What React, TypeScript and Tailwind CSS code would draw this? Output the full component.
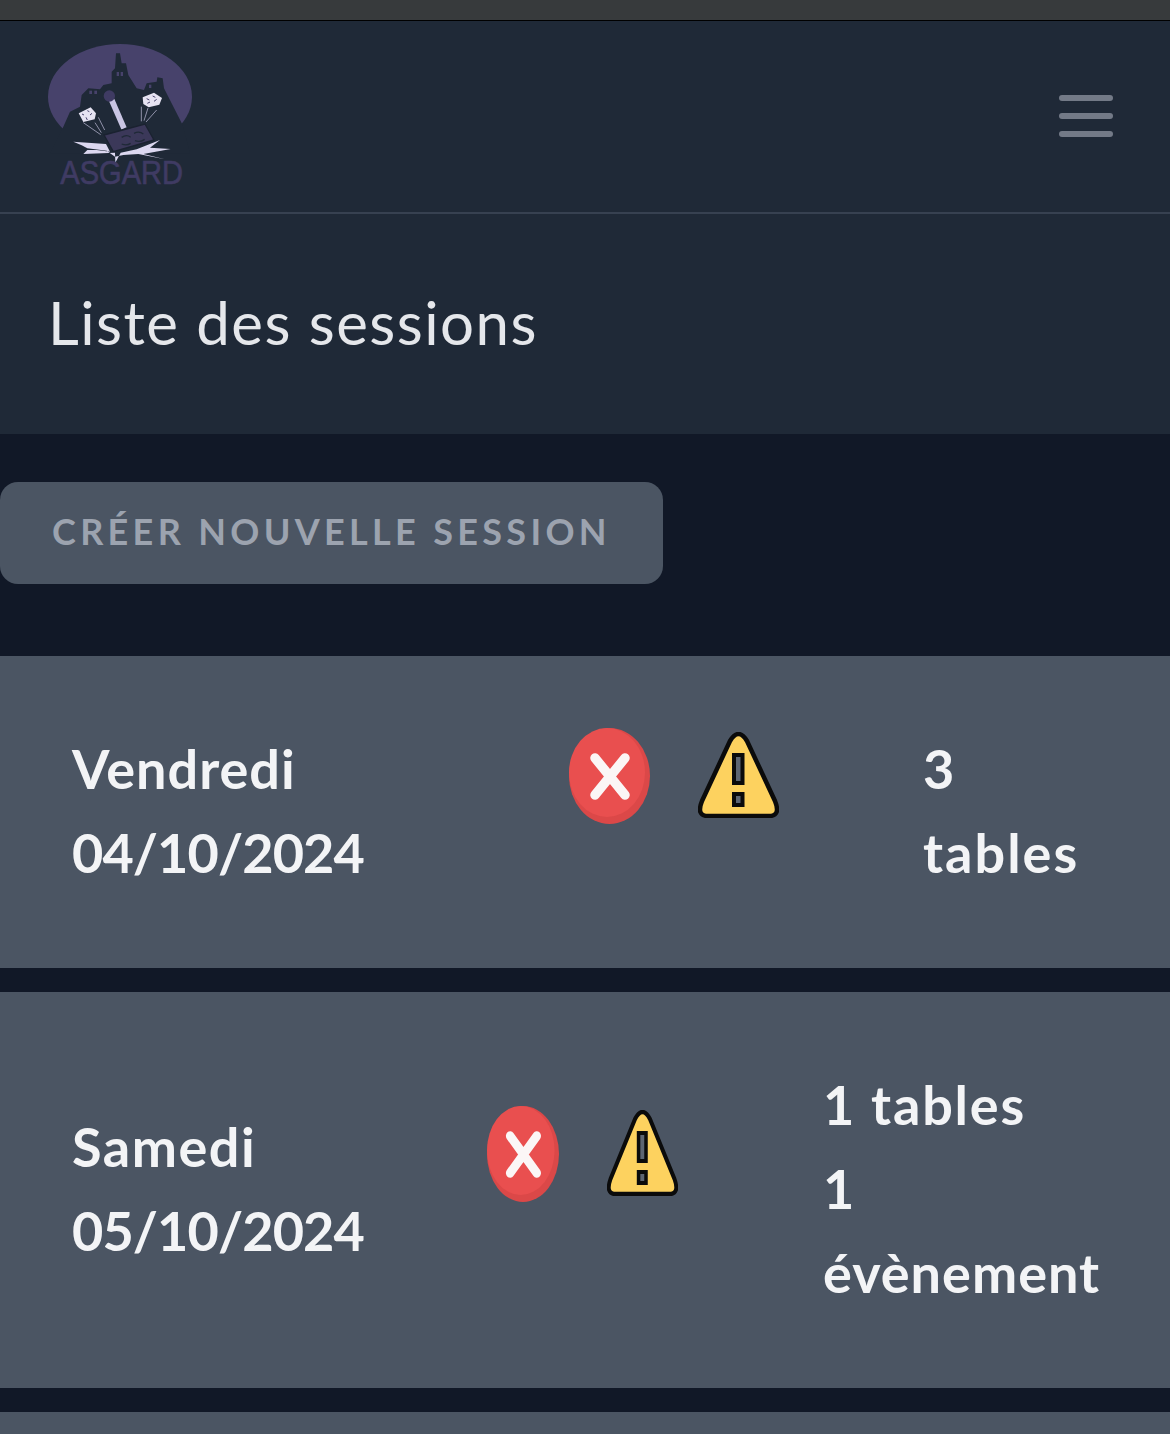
import React from 'react';

function Logo() {
  return (
    <svg viewBox="144 132 432 450" className="h-[150px] w-[144px] shrink-0 overflow-visible">
      <ellipse cx="360" cy="290" rx="216" ry="158" fill="#47426b" />
      {/* castle silhouette */}
      <path
        d="M188 385 L210 335 L240 320 L245 285 L265 265 L300 268 L310 255 L335 250 L335 215 L345 205 L348 160 L360 160 L365 190 L378 190 L385 225 L410 265 L432 270 L440 250 L470 245 L472 232 L488 235 L492 265 L548 375 L570 460 L150 460 Z"
        fill="#1f2937"
      />
      <rect x="268" y="272" width="8" height="10" fill="#47426b" />
      <rect x="283" y="272" width="8" height="10" fill="#47426b" />
      <rect x="350" y="216" width="7" height="12" fill="#47426b" />
      <rect x="362" y="216" width="7" height="12" fill="#47426b" />
      <rect x="447" y="254" width="7" height="10" fill="#47426b" />
      {/* hammer */}
      <path d="M335 300 L372 385" stroke="#c9c5e3" strokeWidth="17" />
      <circle cx="328" cy="288" r="17" fill="#3f3b63" />
      <path d="M312 405 L435 372 L462 420 L340 455 Z" fill="#3b3859" stroke="#1a2230" strokeWidth="4" />
      <path d="M365 412 Q380 402 392 412 M365 432 Q380 438 392 430 M402 400 Q418 392 430 402 M405 422 Q420 428 434 418" stroke="#1f2937" strokeWidth="4" fill="none" />
      {/* cracks */}
      <path
        d="M220 425 L318 432 L330 455 L290 450 L262 450 L250 462 L345 458 L346 488 L362 458 L410 448 L480 420 L450 443 L512 447 L430 462 L495 478 L415 462 L370 465 L345 470 L320 452 L262 445 L245 436 Z"
        fill="#dcd8f0"
      />
      {/* left die */}
      <path d="M236 340 L272 322 L288 340 L284 358 L250 366 Z" fill="#e6e3f2" />
      <path d="M246 342 L252 345 M262 332 L268 335 M270 345 L276 340 M258 352 L262 360" stroke="#47426b" strokeWidth="3" />
      <path d="M250 368 L302 404 M285 368 L304 398 M295 352 L314 390" stroke="#c9c5e3" strokeWidth="2" />
      {/* right die */}
      <path d="M428 292 L462 278 L486 294 L478 314 L446 322 L430 312 Z" fill="#e6e3f2" />
      <path d="M440 296 L448 300 M458 288 L466 292 M462 304 L470 298 M442 310 L450 306" stroke="#47426b" strokeWidth="3" />
      <path d="M424 320 L424 364 M444 324 L432 362 M470 330 L438 366" stroke="#c9c5e3" strokeWidth="2" />
      <text
        x="181"
        y="551"
        textLength="368"
        lengthAdjust="spacingAndGlyphs"
        fontFamily="'Liberation Sans', sans-serif"
        fontSize="98"
        stroke="#3f3b63"
        strokeWidth="2"
        fill="#3f3b63"
      >
        ASGARD
      </text>
    </svg>
  );
}

function ErrorIcon({ className }: { className: string }) {
  return (
    <svg viewBox="0 0 81 96" preserveAspectRatio="none" className={className}>
      <ellipse cx="40.5" cy="48" rx="40.5" ry="48" fill="#db4848" />
      <ellipse cx="38" cy="44.5" rx="38" ry="44.5" fill="#e94f4f" />
      <path d="M26 30 L56 67 M56 30 L26 67" stroke="#fbf6f6" strokeWidth="9.5" strokeLinecap="round" />
    </svg>
  );
}

function WarningIcon({ className }: { className: string }) {
  return (
    <svg viewBox="0 0 81 86" preserveAspectRatio="none" className={className}>
      <path
        d="M32 9 Q40.5 -5 49 9 L77 69 Q83 84 71 84 L10 84 Q-2 84 4 69 Z"
        fill="#fdd25f"
        stroke="#0b0b0b"
        strokeWidth="4.5"
        strokeLinejoin="round"
      />
      <rect x="36" y="23" width="8.5" height="28" fill="#5d6572" stroke="#0b0b0b" strokeWidth="4" />
      <rect x="36" y="62" width="8.5" height="11" fill="#5d6572" stroke="#0b0b0b" strokeWidth="4" />
    </svg>
  );
}

export default function App() {
  return (
    <div className="flex h-[1434px] flex-col overflow-hidden bg-[#111827] font-['Lato',sans-serif]">
      <div className="h-[21px] shrink-0 border-b border-black bg-[#373a3c]" />

      <nav className="flex h-[193px] shrink-0 items-start justify-between border-b-2 border-[#374151] bg-[#1f2937] pl-12 pr-[57px] pt-[23px]">
        <Logo />
        <div className="mt-[51px] flex w-[54px] flex-col gap-3">
          <span className="h-1.5 rounded-full bg-[#737a87]" />
          <span className="h-1.5 rounded-full bg-[#737a87]" />
          <span className="h-1.5 rounded-full bg-[#737a87]" />
        </div>
      </nav>

      <header className="flex h-[220px] shrink-0 items-center bg-[#1f2937] pl-12 pb-1">
        <h1 className="text-[60px] leading-[84px] tracking-[1.45px] text-[#e5e7eb]">Liste des sessions</h1>
      </header>

      <div className="py-12">
        <button className="flex h-[102px] w-[663px] items-center rounded-[18px] bg-[#4b5563] pb-1 pl-[52px] text-[36px] font-bold uppercase tracking-[0.12em] text-[#9ca3af]">
          Créer nouvelle session
        </button>
      </div>

      <div className="mt-6 flex flex-col gap-6">
        <section className="flex items-center bg-[#4b5563] px-[72px] py-[72px] text-[54px] font-bold leading-[84px] text-[#f3f4f6]">
          <div className="w-[291px] shrink-0 -translate-y-px">
            <div className="tracking-[1px]">Vendredi</div>
            <div className="tracking-[-0.9px]">04/10/2024</div>
          </div>
          <div className="ml-[206px] flex h-[168px] shrink-0 items-start gap-12">
            <ErrorIcon className="h-[96px] w-[81px]" />
            <WarningIcon className="mt-1 h-[86px] w-[81px]" />
          </div>
          <div className="ml-auto w-[175px] -translate-y-px tracking-[2px]">3 tables</div>
        </section>

        <section className="flex items-center bg-[#4b5563] px-[72px] py-[72px] text-[54px] font-bold leading-[84px] text-[#f3f4f6]">
          <div className="w-[291px] shrink-0 -translate-y-px">
            <div className="tracking-[1.5px]">Samedi</div>
            <div className="tracking-[-0.9px]">05/10/2024</div>
          </div>
          <div className="ml-[124px] flex h-[168px] shrink-0 items-start gap-12">
            <ErrorIcon className="h-[96px] w-[72px]" />
            <WarningIcon className="mt-1 h-[86px] w-[71px]" />
          </div>
          <div className="ml-auto w-[275px] -translate-y-px tracking-[1px]">
            <div className="tracking-[1.8px]">1 tables</div>
            <div>1 évènement</div>
          </div>
        </section>

        <section className="h-[60px] bg-[#4b5563]" />
      </div>
    </div>
  );
}
